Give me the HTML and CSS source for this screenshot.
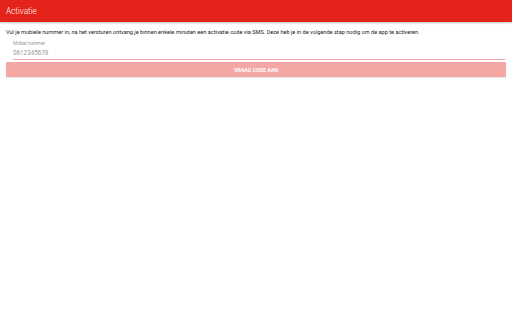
FILE: index.html
```html
<!DOCTYPE html>
<html lang="nl">
<head>
  <meta charset="UTF-8">
  <meta name="viewport" content="width=device-width, initial-scale=1.0">
  <title>Activatie</title>
  <link rel="stylesheet" href="styles.css">
</head>
<body>
  <header class="toolbar">
    <h1>Activatie</h1>
  </header>

  <main class="content">
    <p class="intro">Vul je mobiele nummer in, na het versturen ontvang je binnen enkele minuten een activatie code via SMS. Deze heb je in de volgende stap nodig om de app te activeren.</p>

    <div class="veld">
      <label for="nummer">Mobiel nummer</label>
      <input id="nummer" type="text" placeholder="0612345678">
    </div>

    <button class="knop" disabled>VRAAG CODE AAN</button>
  </main>
</body>
</html>
```

FILE: styles.css
```css
body {
  font-family: Roboto, "Noto Sans", sans-serif;
  margin: 0;
  padding: 0;
  background-color: #fff;
  color: #222;
}
.toolbar {
  background-color: #e4231b;
  color: #fff;
  height: 22px;
  padding: 0 6px;
  display: flex;
  align-items: center;
  box-shadow: 0 1px 2px rgba(0,0,0,0.25);
}
.toolbar h1 {
  margin: 0;
  font-size: 8.2px;
  font-weight: 300;
}
.content {
  padding: 6px 6px;
}
.intro {
  margin: 0;
  font-size: 5.6px;
  line-height: 8px;
}
.veld {
  display: flex;
  flex-direction: column;
  margin: 5px 1px 0 7px;
}
.veld label {
  font-size: 4.6px;
  color: #999;
  line-height: 6px;
}
.veld input {
  font-family: inherit;
  font-size: 6.3px;
  color: #777;
  border: none;
  border-bottom: 1px solid #f4a7a4;
  padding: 2px 0 2px;
  outline: none;
  background: transparent;
}
.veld input::placeholder {
  color: #999;
}
.knop {
  display: block;
  width: 100%;
  margin-top: 2px;
  height: 15px;
  background-color: #f4a7a4;
  color: #fff;
  border: none;
  border-radius: 1px;
  font-family: inherit;
  font-size: 5.2px;
  font-weight: 700;
  box-shadow: 0 1px 1px rgba(0,0,0,0.12);
}
```
